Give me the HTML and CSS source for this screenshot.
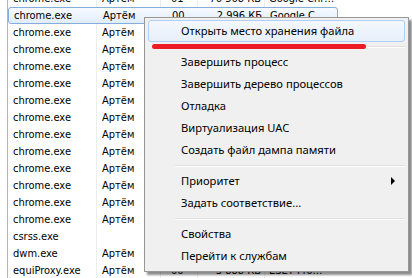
FILE: index.html
```html
<!DOCTYPE html>
<html>
<head>
    <title>Диспетчер задач</title>
    <link rel="stylesheet" href="styles.css">
</head>
<body>
    <div class="list">
        <div class="row row-top">
            <div class="cell name">chrome.exe</div>
            <div class="cell user">Артём</div>
            <div class="cell cpu">01</div>
            <div class="cell mem">76 568 КБ</div>
            <div class="cell desc">Google Chr…</div>
        </div>
        <div class="row selected">
            <div class="cell name">chrome.exe</div>
            <div class="cell user">Артём</div>
            <div class="cell cpu">00</div>
            <div class="cell mem">2 996 КБ</div>
            <div class="cell desc">Google C…</div>
        </div>
        <div class="row"><div class="cell name">chrome.exe</div><div class="cell user">Артём</div><div class="cell cpu"></div><div class="cell mem"></div><div class="cell desc"></div></div>
        <div class="row"><div class="cell name">chrome.exe</div><div class="cell user">Артём</div><div class="cell cpu"></div><div class="cell mem"></div><div class="cell desc"></div></div>
        <div class="row"><div class="cell name">chrome.exe</div><div class="cell user">Артём</div><div class="cell cpu"></div><div class="cell mem"></div><div class="cell desc"></div></div>
        <div class="row"><div class="cell name">chrome.exe</div><div class="cell user">Артём</div><div class="cell cpu"></div><div class="cell mem"></div><div class="cell desc"></div></div>
        <div class="row"><div class="cell name">chrome.exe</div><div class="cell user">Артём</div><div class="cell cpu"></div><div class="cell mem"></div><div class="cell desc"></div></div>
        <div class="row"><div class="cell name">chrome.exe</div><div class="cell user">Артём</div><div class="cell cpu"></div><div class="cell mem"></div><div class="cell desc"></div></div>
        <div class="row"><div class="cell name">chrome.exe</div><div class="cell user">Артём</div><div class="cell cpu"></div><div class="cell mem"></div><div class="cell desc"></div></div>
        <div class="row"><div class="cell name">chrome.exe</div><div class="cell user">Артём</div><div class="cell cpu"></div><div class="cell mem"></div><div class="cell desc"></div></div>
        <div class="row"><div class="cell name">chrome.exe</div><div class="cell user">Артём</div><div class="cell cpu"></div><div class="cell mem"></div><div class="cell desc"></div></div>
        <div class="row"><div class="cell name">chrome.exe</div><div class="cell user">Артём</div><div class="cell cpu"></div><div class="cell mem"></div><div class="cell desc"></div></div>
        <div class="row"><div class="cell name">chrome.exe</div><div class="cell user">Артём</div><div class="cell cpu"></div><div class="cell mem"></div><div class="cell desc"></div></div>
        <div class="row"><div class="cell name">chrome.exe</div><div class="cell user">Артём</div><div class="cell cpu"></div><div class="cell mem"></div><div class="cell desc"></div></div>
        <div class="row"><div class="cell name">csrss.exe</div><div class="cell user"></div><div class="cell cpu"></div><div class="cell mem"></div><div class="cell desc"></div></div>
        <div class="row"><div class="cell name">dwm.exe</div><div class="cell user">Артём</div><div class="cell cpu"></div><div class="cell mem"></div><div class="cell desc"></div></div>
        <div class="row"><div class="cell name">equiProxy.exe</div><div class="cell user">Артём</div><div class="cell cpu">00</div><div class="cell mem">3 888 КБ</div><div class="cell desc">ESET Pro…</div></div>
    </div>

    <div class="menu">
        <div class="item active">Открыть место хранения файла</div>
        <div class="sep"></div>
        <div class="item">Завершить процесс</div>
        <div class="item">Завершить дерево процессов</div>
        <div class="item">Отладка</div>
        <div class="item">Виртуализация UAC</div>
        <div class="item">Создать файл дампа памяти</div>
        <div class="sep"></div>
        <div class="item submenu">Приоритет</div>
        <div class="item">Задать соответствие...</div>
        <div class="sep"></div>
        <div class="item">Свойства</div>
        <div class="item">Перейти к службам</div>
    </div>

    <div class="scribble"></div>
</body>
</html>
```

FILE: styles.css
```css
body {
    margin: 0;
    width: 412px;
    height: 278px;
    overflow: hidden;
    background-color: white;
    font-family: "Liberation Sans", Arial, sans-serif;
    color: #000;
}

.list {
    margin-top: -10px;
    margin-left: 7px;
    width: 330px;
    border-left: 1px solid #b5b5b5;
    font-family: "DejaVu Sans Condensed", "DejaVu Sans", sans-serif;
    font-stretch: condensed;
    font-size: 11px;
}

.row {
    display: grid;
    grid-template-columns: 89px 64px 37px 67px 72px;
    height: 17px;
    line-height: 17px;
    box-sizing: border-box;
}

.cell {
    border-right: 1px solid #ededed;
    white-space: nowrap;
    overflow: hidden;
}

.name, .user {
    padding-left: 5px;
}

.cpu {
    padding-left: 10px;
}

.mem {
    text-align: right;
    padding-right: 3px;
}

.desc {
    padding-left: 4px;
    border-right: none;
}

.row.selected {
    border: 1px solid #84acdd;
    border-radius: 3px;
    background: linear-gradient(#f7faff, #e1ecfb);
    line-height: 15px;
}

.row.selected .cell {
    border-right-color: transparent;
}

.menu {
    position: absolute;
    left: 144px;
    top: 17px;
    width: 257px;
    padding: 2px 3px 4px 3px;
    background-color: #f0f0f0;
    border: 1px solid #979797;
    box-shadow: 3px 3px 2px rgba(0, 0, 0, 0.45);
    font-family: "Noto Sans", "Open Sans", sans-serif;
    font-size: 11.2px;
}

.item {
    height: 22px;
    line-height: 20px;
    padding-left: 32px;
    box-sizing: border-box;
    border: 1px solid transparent;
    border-radius: 3px;
    position: relative;
}

.item.active {
    border-color: #aecff7;
    background: linear-gradient(#f4f8fd, #e7effa);
}

.item.submenu::after {
    content: "";
    position: absolute;
    right: 9px;
    top: 6px;
    border-left: 4px solid #000;
    border-top: 4px solid transparent;
    border-bottom: 4px solid transparent;
}

.sep {
    height: 9px;
    margin-left: 27px;
    box-sizing: border-box;
    padding-top: 4px;
}

.sep::before {
    content: "";
    display: block;
    height: 1px;
    background-color: #e0e0e0;
    border-bottom: 1px solid #ffffff;
}

.scribble {
    position: absolute;
    left: 152px;
    top: 44px;
    width: 214px;
    height: 5px;
    background-color: #ed1c24;
    border-radius: 3px;
}
```
